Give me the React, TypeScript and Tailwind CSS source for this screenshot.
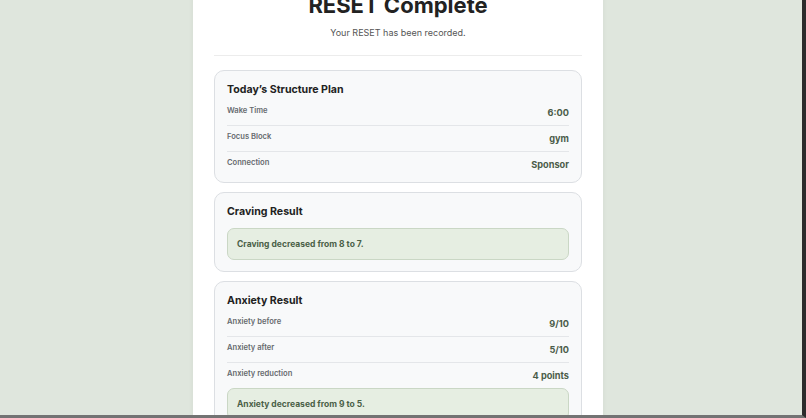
const PLAN = [
  { label: 'Wake Time', value: '6:00' },
  { label: 'Focus Block', value: 'gym' },
  { label: 'Connection', value: 'Sponsor' },
]

const ANXIETY = [
  { label: 'Anxiety before', value: '9/10' },
  { label: 'Anxiety after', value: '5/10' },
  { label: 'Anxiety reduction', value: '4 points' },
]

function Row({ label, value, last }: { label: string; value: string; last?: boolean }) {
  return (
    <div className={`flex items-start justify-between pt-[6px] pb-[5px] ${last ? '' : 'border-b border-[#e4e6e9]'}`}>
      <span className="text-[7.6px] leading-[10px] font-semibold text-[#666a6e]">{label}</span>
      <span className="text-[9.2px] leading-[14px] font-bold text-[#4b5c49]">{value}</span>
    </div>
  )
}

function Section({ title, children }: { title: string; children: React.ReactNode }) {
  return (
    <section className="rounded-[10px] border border-[#dcdfe3] bg-[#f8f9fa] px-3 pt-3">
      <h2 className="mb-[3px] text-[10.6px] leading-[14px] font-bold text-[#222]">{title}</h2>
      {children}
    </section>
  )
}

function Callout({ text }: { text: string }) {
  return (
    <div className="flex h-[32px] items-center rounded-[7px] border border-[#cad7c5] bg-[#e6eee2] px-[9px] text-[8.5px] leading-[12px] font-bold text-[#4a6047]">
      {text}
    </div>
  )
}

export default function App() {
  return (
    <div
      className="h-[418px] w-[806px] overflow-hidden border-r-4 border-b-[3px] border-r-[#2c2c2c] border-b-[#737373] bg-[#dfe6dd]"
      style={{ fontFamily: 'Inter, "Noto Sans", sans-serif' }}
    >
      <div className="ml-[193px] min-h-full w-[410px] bg-white px-[21px] shadow-[0_0_6px_rgba(0,0,0,0.05)]">
        <h1 className="mt-[-8px] text-center text-[22px] leading-[26px] font-bold text-[#222]">RESET Complete</h1>
        <p className="mt-[9px] text-center text-[9px] leading-[12px] text-[#555]">Your RESET has been recorded.</p>
        <div className="mt-[16px] h-px bg-[#ececec]" />

        <div className="mt-[14px] flex flex-col gap-[9px]">
          <Section title="Today’s Structure Plan">
            <div className="pb-[5px]">
              {PLAN.map((r, i) => (
                <Row key={r.label} {...r} last={i === PLAN.length - 1} />
              ))}
            </div>
          </Section>

          <Section title="Craving Result">
            <div className="mt-[9px] pb-[11px]">
              <Callout text="Craving decreased from 8 to 7." />
            </div>
          </Section>

          <Section title="Anxiety Result">
            {ANXIETY.map((r, i) => (
              <Row key={r.label} {...r} last={i === ANXIETY.length - 1} />
            ))}
            <div className="pb-[11px]">
              <Callout text="Anxiety decreased from 9 to 5." />
            </div>
          </Section>
        </div>
      </div>
    </div>
  )
}
